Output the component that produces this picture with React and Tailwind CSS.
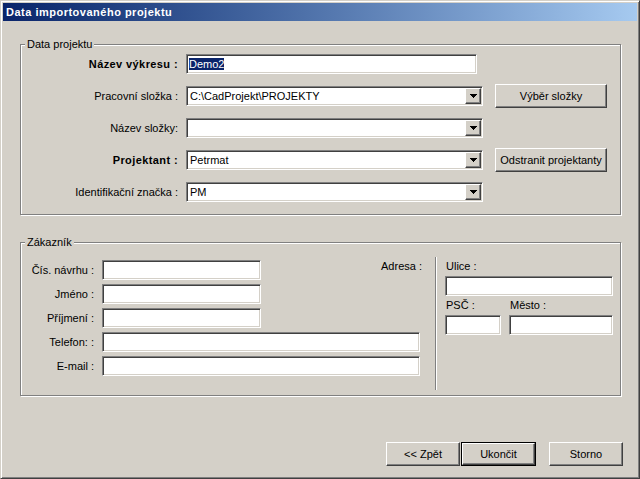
import React from "react";

const sunken =
  "border border-t-[#808080] border-l-[#808080] border-b-white border-r-white bg-white p-px shadow-[inset_1px_1px_0_#404040,inset_-1px_-1px_0_#d4d0c8]";
const raised =
  "border border-t-white border-l-white border-b-[#404040] border-r-[#404040] bg-[#d4d0c8] shadow-[inset_-1px_-1px_0_#808080]";

function Arrow() {
  return (
    <div className={`${raised} flex h-[16px] w-[16px] shrink-0 items-center justify-center`}>
      <svg width="7" height="4" viewBox="0 0 7 4" shapeRendering="crispEdges">
        <path d="M0 0h7v1H0z M1 1h5v1H1z M2 2h3v1H2z M3 3h1v1H3z" fill="#000" />
      </svg>
    </div>
  );
}

function TextBox({ width, children }) {
  return (
    <div className={`${sunken} flex h-[20px] items-center`} style={{ width }}>
      <div className="flex-1 overflow-hidden whitespace-nowrap pl-px leading-[16px]">{children}</div>
    </div>
  );
}

function Combo({ width, value }) {
  return (
    <div className={`${sunken} flex h-[20px] items-center`} style={{ width }}>
      <div className="flex-1 overflow-hidden whitespace-nowrap pl-[2px] leading-[16px]">{value}</div>
      <Arrow />
    </div>
  );
}

function Button({ width, children, isDefault }) {
  if (isDefault) {
    return (
      <div className="h-[24px] border border-black" style={{ width }}>
        <div className={`${raised} flex h-full w-full items-center justify-center`}>{children}</div>
      </div>
    );
  }
  return (
    <div className={`${raised} flex h-[24px] items-center justify-center`} style={{ width }}>
      {children}
    </div>
  );
}

function Group({ title, className, children }) {
  return (
    <div
      className={`relative ml-[17px] w-[601px] border border-[#808080] shadow-[1px_1px_0_#fff,inset_1px_1px_0_#fff] ${className}`}
    >
      <span className="absolute left-[4px] top-[-7px] bg-[#d4d0c8] px-[2px] leading-[13px]">{title}</span>
      {children}
    </div>
  );
}

function Row({ label, bold, children }) {
  return (
    <div className="flex h-[32px] items-center">
      <div className={`w-[157px] text-right ${bold ? "font-bold tracking-[0.4px]" : ""}`}>{label}</div>
      <div className="ml-[8px] flex items-center gap-[12px]">{children}</div>
    </div>
  );
}

function CustRow({ label, width, children }) {
  return (
    <div className="flex h-[20px] items-start">
      <div className="w-[73px] self-center text-right">{label}</div>
      <div className="ml-[8px]">
        <TextBox width={width} />
      </div>
      {children}
    </div>
  );
}

export default function App() {
  return (
    <div className="h-[479px] w-[640px] border border-t-[#d4d0c8] border-l-[#d4d0c8] border-r-[#404040] border-b-[#404040] bg-[#d4d0c8] p-[2px] font-['Liberation_Sans',Arial,sans-serif] text-[11px] text-black shadow-[inset_1px_1px_0_#fff,inset_-1px_-1px_0_#808080]">
      {/* title bar */}
      <div className="flex h-[18px] items-center bg-gradient-to-r from-[#0a246a] to-[#a6caf0] pl-[3px] font-bold tracking-[0.5px] text-white">
        Data importovaného projektu
      </div>

      {/* Data projektu */}
      <Group title="Data projektu" className="mt-[23px] h-[171px] pt-[3px]">
        <Row label="Název výkresu :" bold>
          <TextBox width={291}>
            <span className="bg-[#0a246a] text-white">Demo2</span>
          </TextBox>
        </Row>
        <Row label="Pracovní složka :">
          <Combo width={297} value="C:\CadProjekt\PROJEKTY" />
          <Button width={112}>Výběr složky</Button>
        </Row>
        <Row label="Název složky:">
          <Combo width={297} value="" />
        </Row>
        <Row label="Projektant :" bold>
          <Combo width={297} value="Petrmat" />
          <Button width={112}>Odstranit projektanty</Button>
        </Row>
        <Row label="Identifikační značka :">
          <Combo width={297} value="PM" />
        </Row>
      </Group>

      {/* Zákazník */}
      <Group title="Zákazník" className="mt-[27px] h-[154px] pt-[14px]">
        <div className="flex h-[133px]">
          <div className="mt-[3px] flex w-[401px] flex-col gap-[4px]">
            <CustRow label="Čís. návrhu :" width={159}>
              <div className="flex-1 text-right leading-[13px]">Adresa :</div>
            </CustRow>
            <CustRow label="Jméno :" width={159} />
            <CustRow label="Příjmení :" width={159} />
            <CustRow label="Telefon: :" width={318} />
            <CustRow label="E-mail :" width={318} />
          </div>
          <div className="ml-[13px] w-[2px] border-l border-l-[#808080] border-r border-r-white" />
          <div className="ml-[8px] mt-[3px] w-[168px]">
            <div className="pl-px leading-[13px]">Ulice :</div>
            <div className="mt-[3px]">
              <TextBox width={168} />
            </div>
            <div className="mt-[3px] flex gap-[8px] leading-[13px]">
              <div className="w-[56px] pl-px">PSČ :</div>
              <div className="pl-px">Město :</div>
            </div>
            <div className="mt-[3px] flex gap-[8px]">
              <TextBox width={56} />
              <TextBox width={104} />
            </div>
          </div>
        </div>
      </Group>

      {/* buttons */}
      <div className="ml-[383px] mt-[46px] flex items-center">
        <Button width={74}>&lt;&lt; Zpět</Button>
        <div className="ml-px">
          <Button width={75} isDefault>
            Ukončit
          </Button>
        </div>
        <div className="ml-[13px]">
          <Button width={74}>Storno</Button>
        </div>
      </div>
    </div>
  );
}
